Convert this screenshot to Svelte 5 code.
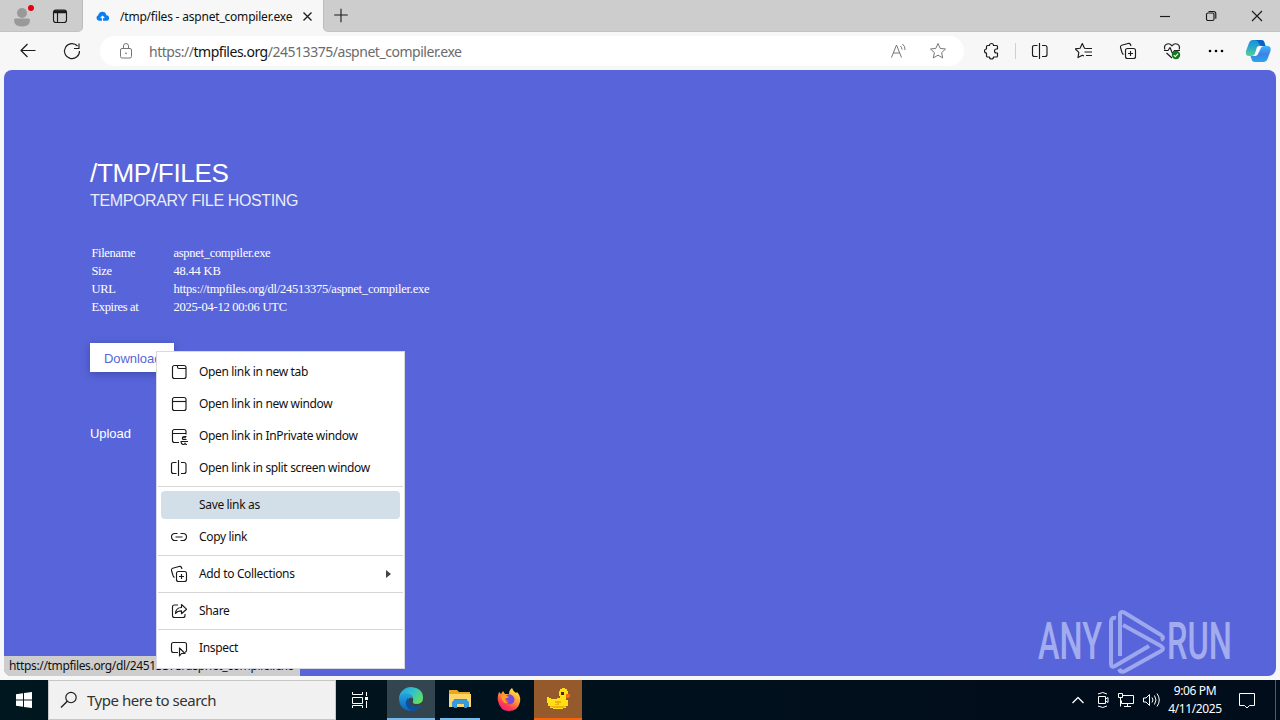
<script>
  const details = [
    ['Filename', 'aspnet_compiler.exe', -0.29],
    ['Size', '48.44 KB', -0.2],
    ['URL', 'https://tmpfiles.org/dl/24513375/aspnet_compiler.exe', -0.23],
    ['Expires at', '2025-04-12 00:06 UTC', -0.24]
  ];
  const groups = [
    [
      { icon: 'tab', label: 'Open link in new tab' },
      { icon: 'window', label: 'Open link in new window' },
      { icon: 'private', label: 'Open link in InPrivate window' },
      { icon: 'split', label: 'Open link in split screen window' }
    ],
    [
      { icon: '', label: 'Save link as', active: true },
      { icon: 'link', label: 'Copy link' }
    ],
    [{ icon: 'collections', label: 'Add to Collections', sub: true }],
    [{ icon: 'share', label: 'Share' }],
    [{ icon: 'inspect', label: 'Inspect' }]
  ];
</script>

{#snippet icon(name)}
  <svg class="ico" viewBox="0 0 18 18" width="18" height="18">
    {#if name === 'tab'}
      <rect x="2.5" y="2.5" width="13.500" height="13" rx="2" /><path d="M7.500 2.500v1.500q0 1.500 1.500 1.500h7" />
    {:else if name === 'window'}
      <rect x="2.5" y="2.5" width="13.500" height="13" rx="2" /><path d="M2.500 6.500h13.500" />
    {:else if name === 'private'}
      <path d="M9 15.500H4.500q-2 0-2-2v-9q0-2 2-2h9.500q2 0 2 2v3M2.500 6.500h13.500M16.500 9.500h-2.500q-1.500 0-1.500 1.200h3.500M12.500 10.700q-.5 1.800 1.500 1.800h2.500M10.500 14.500h7.500M11 14.500q0 3 2.500 3 1.500 0 1.500-1.500 0 1.500 2 1.500" />
    {:else if name === 'split'}
      <path d="M6.500 3.500h-3q-2 0-2 2v7q0 2 2 2h3M11 3.500h3q2 0 2 2v7q0 2-2 2h-3M8.500 1v16" />
    {:else if name === 'link'}
      <path d="M7.500 5.500H5a3.500 3.500 0 0 0 0 7h2.500M10.500 5.500H13a3.500 3.500 0 0 1 0 7h-2.500M5.500 9h7" />
    {:else if name === 'collections'}
      <rect x="6.500" y="6.500" width="10" height="10" rx="2" /><path d="M11.500 9v5M9 11.500h5M4.500 12.500Q3.500 12 3 10.500L1.500 5.500Q1 3.800 2.700 3.200L9 1.500q1.800-.4 2.500 1l.5 1.500" />
    {:else if name === 'share'}
      <path d="M8 3H4.500q-2 0-2 2v8.500q0 2 2 2H13q2 0 2-2V12M5.500 11.500Q6 5.500 11.500 5.500V2.500l5 4.700-5 4.500V8.800Q7.500 8.800 5.500 11.500Z" />
    {:else if name === 'inspect'}
      <path d="M8 13.500H3.500q-2 0-2-2v-6q0-2 2-2h11q2 0 2 2v6q0 1.500-1.500 1.800M9.500 9v8l2-2.500h3.500Z" />
    {/if}
  </svg>
{/snippet}

<div class="screen">
  <div class="tabs">
    <div class="left-tabs">
      <svg width="34" height="32" viewBox="0 0 34 32"><g fill="#999"><circle cx="22" cy="13" r="5" /><path d="M14 20q0-1.500 1.500-1.500h13q1.500 0 1.500 1.500 0 6.500-8 6.500T14 20Z" /></g><circle cx="31" cy="8" r="3" fill="#e3000f" /></svg>
      <svg class="ico panel" width="16" height="16" viewBox="0 0 16 16"><rect x="1.500" y="2" width="13" height="12.500" rx="2.500" /><path d="M2 4.500h12M2 3.200h12" stroke-width="1.700" /><path d="M5.500 5v9" /></svg>
    </div>
    <div class="tab">
      <svg width="13" height="11" viewBox="0 0 13 11"><path d="M3 9.800A2.900 2.900 0 0 1 2.200 4.300Q3 .8 6.300.8T10.500 4.200A2.800 2.800 0 0 1 10 9.800Z" fill="#0d7df5" /><path d="M6.500 10V5.500M4.700 7l1.800-1.800L8.300 7" stroke="#f7f7f7" stroke-width="1.100" fill="none" /></svg>
      <span class="title">/tmp/files - aspnet_compiler.exe</span>
      <svg class="ico close" width="11" height="11" viewBox="0 0 11 11"><path d="M1.500 1.500l8 8M9.500 1.500l-8 8" stroke-width="1.300" /></svg>
    </div>
    <svg class="ico plus" width="34" height="32" viewBox="0 0 34 32"><path d="M17.500 9v14M10.500 15.500h14" /></svg>
    <div class="controls">
      <svg class="ico" width="12" height="12" viewBox="0 0 12 12"><path d="M1 6.500h10" /></svg>
      <svg class="ico" width="12" height="12" viewBox="0 0 12 12"><rect x="1.500" y="3" width="7.500" height="7.500" rx="1.500" /><path d="M3.500 1.500h5q2.300 0 2.300 2.300v5" /></svg>
      <svg class="ico" width="12" height="12" viewBox="0 0 12 12"><path d="M1 1l10 10M11 1L1 11" /></svg>
    </div>
  </div>

  <div class="toolbar">
    <svg class="ico back" width="18" height="18" viewBox="0 0 18 18"><path d="M17.500 8.500H3M9.500 2L3 8.500 9.500 15" /></svg>
    <svg class="ico reload" width="18" height="18" viewBox="0 0 18 18"><path d="M16.500 9A7.500 7.500 0 1 1 14.500 4M16 1.500v5h-5" /></svg>
    <div class="address">
      <svg class="ico gray" width="14" height="18" viewBox="0 0 14 18"><rect x="1.500" y="6.500" width="11" height="9.500" rx="1.500" /><path d="M4.500 6.500V4a2.500 2.500 0 0 1 5 0v2.500" /><circle cx="7" cy="11.300" r=".5" /></svg>
      <span class="url">https://<b>tmpfiles.org</b>/24513375/aspnet_compiler.exe</span>
      <svg class="ico gray read" width="18" height="18" viewBox="0 0 18 18"><path d="M1.500 15.500L6.500 3l5 12.500M3.200 11h6.600M10.500 4q1.500 1.400 1.500 3.500M12.500 2q3 2.500 2.500 6" /></svg>
      <svg class="ico gray star" width="18" height="18" viewBox="0 0 18 18"><path d="M9 1.500l2.200 4.900 5.300.6-3.900 3.600 1.100 5.300L9 13.200l-4.700 2.700 1.100-5.300L1.500 7l5.300-.6Z" /></svg>
    </div>
    <div class="tools">
      <svg class="ico puzzle" width="18" height="18" viewBox="0 0 18 18"><path d="M5.500 3.500h2a2 2 0 0 1 4 0H14.500q1 0 1 1V7h-1a2 2 0 0 0 0 4h1v3q0 1-1 1h-3a2 2 0 0 1-4 0h-2q-1 0-1-1v-3a2 2 0 0 1 0-4V4.500q0-1 1-1Z" /></svg>
      <i class="divider"></i>
      {@render icon('split')}
      <svg class="ico" width="18" height="18" viewBox="0 0 18 18"><path d="M11.500 6.500l-2-.3-2.200-4.700-2.200 4.700-4.800.7 3.500 3.500-.8 5.200 4.300-2.300 1.700.8M11 6.500h6M9.500 10h7.500M11 13.500h6" /></svg>
      {@render icon('collections')}
      <svg class="ico" width="18" height="18" viewBox="0 0 18 18"><path d="M2 7.500C0 3 5.500-.5 9 3.800 12.500-.5 18 3 16 7.500M1 8.500h4l2-3 2.500 6 2-3h5.500M3.500 11L9 16" /><circle cx="13" cy="13" r="4.200" fill="#15761c" stroke="none" /><path d="M10.800 13.200l1.500 1.400 2.800-3" stroke="#fff" /></svg>
      <svg width="18" height="18" viewBox="0 0 18 18"><circle cx="3" cy="9" r="1.300" /><circle cx="9" cy="9" r="1.300" /><circle cx="15" cy="9" r="1.300" /></svg>
    </div>
    <svg class="copilot" width="26" height="26" viewBox="0 0 26 26">
      <defs>
        <linearGradient id="ca" x1="0" y1="0" x2="0" y2="1"><stop offset="0" stop-color="#1793d6" /><stop offset=".45" stop-color="#2aa6cf" /><stop offset="1" stop-color="#55d58b" /></linearGradient>
        <linearGradient id="cb" x1="0" y1="0" x2="0" y2="1"><stop offset="0" stop-color="#35b9fa" /><stop offset=".5" stop-color="#4280e8" /><stop offset="1" stop-color="#1faae8" /></linearGradient>
      </defs>
      <path d="M8 2h8q3 0 3.500 3l1 3h-5q-2 0-3 3l-2 4q-1 3-4 3H4q-4 0-3-5L4 5q1-3 4-3Z" fill="url(#ca)" />
      <path d="M9 2h7q3 0 3.500 3l1 3h-4q-2-1-3-3-1-3-4.500-3Z" fill="#0b61c5" />
      <path d="M18 24h-8q-3 0-3.500-3l-1-3h5q2 0 3-3l2-4q1-3 4-3h3q4 0 3 5l-3 8q-1 3-4.500 3Z" fill="url(#cb)" />
      <path d="M12 9q1-1 3-1h2q-2 1-3 4l-1.500 4q-1 2-3.500 2h-1q2-1 2.500-4Z" fill="#fff" />
    </svg>
  </div>

  <main>
    <h1>/TMP/FILES</h1>
    <h2>TEMPORARY FILE HOSTING</h2>
    <dl>
      {#each details as [key, value, gap]}
        <dt>{key}</dt><dd style="letter-spacing: {gap}px">{value}</dd>
      {/each}
    </dl>
    <a class="download" href="#download">Download</a>
    <a class="upload" href="#upload">Upload</a>
    <svg class="mark" width="236" height="70" viewBox="0 0 236 70">
      <g fill="#b9c0f5" fill-opacity=".78" font-family="Roboto" font-size="51" font-weight="500">
        <text x="6" y="54" textLength="64" lengthAdjust="spacingAndGlyphs">ANY</text>
        <text x="135" y="54" textLength="65" lengthAdjust="spacingAndGlyphs">RUN</text>
      </g>
      <g fill="none" stroke="#b9c0f5" stroke-opacity=".72" stroke-width="4" stroke-linejoin="round">
        <path d="M84 13q-5-1-5 4v42q0 4 4 2l34-20" />
        <path d="M88 51V10q0-5 5-2l36 22q4 3 0 5" />
        <path d="M91 20l38 21q4 3 0 5L93 66q-4 2-6-2" />
      </g>
    </svg>
  </main>

  <div class="taskbar">
    <div class="start"><svg width="16" height="16" viewBox="0 0 16 16"><path d="M0 2.200L7 1.200V7.500H0ZM8 1L16 0V7.500H8ZM0 8.500H7V14.800L0 13.800ZM8 8.500H16V16L8 15Z" fill="#fff" /></svg></div>
    <div class="search">
      <svg class="ico" width="18" height="18" viewBox="0 0 18 18"><circle cx="11" cy="6.500" r="5.200" /><path d="M7.300 10.200L1 16.500" stroke-width="1.300" /></svg>
      <span>Type here to search</span>
    </div>
    <div class="app view"><svg class="ico white" width="18" height="18" viewBox="0 0 18 18"><path d="M1.500 1v2.500h10V1M1.500 6.500h10v6h-10ZM1.500 17v-2.500h10V17M15.500 1v4M15.500 10v7" /><path d="M14 6h3v3h-3Z" fill="#fff" stroke="none" /></svg></div>
    <div class="app edge">
      <svg width="26" height="26" viewBox="0 0 26 26">
        <defs>
          <linearGradient id="ea" x1="0" y1="0" x2="1" y2=".6"><stop offset="0" stop-color="#239bdf" /><stop offset=".5" stop-color="#30bfd0" /><stop offset="1" stop-color="#60dc64" /></linearGradient>
          <linearGradient id="eb" x1="0" y1="0" x2="0" y2="1"><stop offset="0" stop-color="#24a6df" /><stop offset="1" stop-color="#0b64bb" /></linearGradient>
        </defs>
        <path d="M1 12C2 5 7 1 13 1q12 1 12 11 0 6-7 6-4 0-3-3 1-2-1-4Q9 6 1 12Z" fill="url(#ea)" />
        <path d="M1 12q2-5 8-5 6 1 6 5-5-1-5 3 1 6 8 6 3 0 5-1-4 5-10 5Q1 24 1 12Z" fill="url(#eb)" />
        <path d="M10 12q-4 4-1 9 2 3 6 4 5-1 8-5-3 1-6 1-7-1-7-9Z" fill="#0e4f9c" />
      </svg>
    </div>
    <div class="app folder">
      <svg width="24" height="22" viewBox="0 0 24 22"><path d="M1 2h8l2 2h11v15H1Z" fill="#e9a722" /><path d="M1 6h22v13H1Z" fill="#fcd667" /><path d="M6 11h13v9h-3v-4H9v4H6Z" fill="#2b91d7" /><path d="M4 19v-5l2-2h13l2 2v5h-4v-3H8v3Z" fill="#3a9bdc" /></svg>
    </div>
    <div class="app fox">
      <svg width="26" height="26" viewBox="0 0 26 26">
        <defs><linearGradient id="fx" x1=".8" y1="0" x2=".2" y2="1"><stop offset="0" stop-color="#fff04b" /><stop offset=".45" stop-color="#ff9334" /><stop offset=".75" stop-color="#ff3951" /><stop offset="1" stop-color="#e52091" /></linearGradient></defs>
        <path d="M3 5l2 2 2-3 2 3h4q0-4 3-6 1 3 4 5l1-1q4 4 3 10-2 9-11 9T2 14q-1-4 1-9Z" fill="url(#fx)" />
        <path d="M8 10l3-2q3-2 6 1 3 4 0 7-4 3-8-1l4-1q-4-1-5-4Z" fill="#754bdc" /><path d="M5 9q3-2 6 0l2 1-4 2q0 3 4 4-6 2-8-7Z" fill="#ff9e29" />
      </svg>
    </div>
    <div class="app duck">
      <svg width="26" height="24" viewBox="0 0 26 24"><path d="M15 2h2V1h3v1h2v2h1v7h-2v2h2v6h-2v2h-3v1H8v-1H5v-2H3v-3H2v-6h2v1h2v1h6v-1h3v-2h-1V4h1Z" fill="#ffdf16" /><path d="M10 14h6v2h-2v2h-4v-1h2v-1h-2ZM5 19h16v1h-2v1H8v-1H5Z" fill="#efb10c" /><path d="M21 7h4v3h-1v1h-3Z" fill="#f36818" /><path d="M16 5h3v3h-3Z" fill="#402c09" /></svg>
    </div>
    <div class="tray">
      <svg class="ico white" width="14" height="14" viewBox="0 0 14 14"><path d="M1.500 10L7 4.500l5.500 5.500" stroke-width="1.300" /></svg>
      <svg class="ico white" width="14" height="18" viewBox="0 0 14 18"><path d="M2.500 5.500h7v7h-7ZM9.500 8l2.500-1.500v5L9.500 10M2 3q5-3 9 0M2 15q5 3 9 0" /></svg>
      <svg class="ico white" width="18" height="18" viewBox="0 0 18 18"><path d="M5.500 4.500h11v8h-12v-3M7 15.500h7M10.500 12.500v3M1.500 2.500h4v4h-4ZM3.500 6.500v9" /></svg>
      <svg class="ico white" width="18" height="18" viewBox="0 0 18 18"><path d="M1.500 7h2.500l3.500-3.500v11L4 11H1.500ZM10 6.500q2 2.500 0 5M12.500 4.500q3 4.500 0 9M15 2.500q4.500 6.500 0 13" /></svg>
      <div class="clock"><span>9:06 PM</span><span>4/11/2025</span></div>
      <svg class="ico white note" width="18" height="18" viewBox="0 0 18 18"><path d="M1.500 2.500h15v12h-5L9 17l-2.500-2.500h-5Z" /></svg>
      <i></i>
    </div>
  </div>

  <div class="status">https://tmpfiles.org/dl/24513375/aspnet_compiler.exe</div>
  <div class="menu">
    {#each groups as group, n}
      {#if n > 0}<hr />{/if}
      {#each group as item}
        <div class="item" class:active={item.active}>
          {@render icon(item.icon)}
          <span>{item.label}</span>
          {#if item.sub}<b class="arrow"></b>{/if}
        </div>
      {/each}
    {/each}
  </div>
</div>

<style>
  :global(body) { overflow: hidden; }
  * { box-sizing: border-box; }
  .screen { position: relative; display: flex; flex-direction: column; width: 1280px; height: 720px; overflow: hidden; background: #f7f7f7; font: 12px "Noto Sans", sans-serif; color: #111; }
  svg { display: block; flex: none; }
  .ico { fill: none; stroke: #1b1b1b; stroke-width: 1.15; stroke-linejoin: round; }
  .gray { stroke: #777; stroke-width: 1; }
  .white { stroke: #fff; stroke-width: 1; }
  .tabs { display: flex; flex: none; height: 32px; background: #f7f7f7; }
  .left-tabs { display: flex; align-items: center; width: 83px; background: #cdcdcd; border-radius: 0 0 5px 0; border-right: 1px solid #bcbcbc; border-bottom: 1px solid #c3c3c3; }
  .panel { margin-left: 18px; }
  .tab { display: flex; align-items: center; width: 240px; padding-left: 13px; }
  .title { width: 174px; margin-left: 11px; white-space: nowrap; letter-spacing: -.2px; }
  .close { margin-left: 8px; }
  .plus { background: #cdcdcd; border-radius: 0 0 0 5px; border-bottom: 1px solid #c3c3c3; border-left: 1px solid #bcbcbc; }
  .controls { display: flex; flex: 1; justify-content: flex-end; gap: 34px; align-items: center; padding-right: 17px; background: #cdcdcd; border-bottom: 1px solid #c3c3c3; }
  .toolbar { display: flex; flex: none; align-items: center; height: 38px; }
  .back { margin-left: 18px; }
  .reload { margin-left: 27px; }
  .address { display: flex; align-items: center; width: 864px; height: 30px; margin-left: 19px; padding: 0 17px 0 19px; border-radius: 15px; background: #fff; }
  .url { margin-left: 16px; font-size: 14px; color: #6b6b6b; white-space: nowrap; letter-spacing: -.47px; }
  .url b { font-weight: 400; color: #111; }
  .read { margin-left: auto; }
  .star { margin-left: 21px; }
  .tools { display: flex; align-items: center; gap: 26px; margin-left: 18px; }
  .divider { width: 1px; height: 16px; margin: 0 -11px; background: #d0d0d0; }
  .copilot { margin-left: 20px; }
  main { display: flex; flex-direction: column; align-items: flex-start; flex: none; position: relative; height: 606px; margin: 0 4px; padding: 88px 0 0 86px; border-radius: 8px; background: #5865da; color: #fff; font-family: "Liberation Sans", sans-serif; }
  h1 { margin: 0; font-size: 26px; line-height: 30px; font-weight: 400; letter-spacing: -.3px; }
  h2 { margin: 4px 0 0; font-size: 16px; line-height: 18px; font-weight: 400; opacity: .88; white-space: nowrap; letter-spacing: -.38px; }
  dl { display: grid; grid-template-columns: 82px auto; grid-auto-rows: 18px; margin: 34px 0 0 1.5px; font: 12.5px/18px "Liberation Serif", serif; }
  dt { letter-spacing: -.35px; }
  dd { margin: 0; white-space: nowrap; }
  a { color: inherit; text-decoration: none; font-size: 13px; letter-spacing: -.05px; }
  .download { width: 84px; height: 29px; margin-top: 27px; padding-left: 14px; background: #fff; color: #5865da; line-height: 31px; box-shadow: 0 2px 8px rgba(20, 25, 80, .35); }
  .upload { margin-top: 54px; line-height: 16px; }
  .mark { position: absolute; left: 1028px; top: 535px; }
  .status { position: absolute; left: 4px; top: 656px; width: 296px; height: 20px; padding-left: 5px; background: #cdcdcd; border-radius: 0 0 0 7px; line-height: 20px; white-space: nowrap; letter-spacing: -.35px; }
  .menu { position: absolute; display: flex; flex-direction: column; left: 156px; top: 351px; width: 249px; height: 318px; padding: 4px 0; border: 1px solid #d9d9df; background: #fff; }
  .item { display: flex; align-items: center; height: 32px; padding: 0 9px; margin: 0 4px; }
  .item span { margin-left: 11px; padding-bottom: 1px; white-space: nowrap; letter-spacing: -.34px; }
  .active { height: 28px; margin-top: 2px; margin-bottom: 2px; border-radius: 4px; background: #d3dfe8; }
  .arrow { margin-left: auto; border: 4px solid transparent; border-left: 5px solid #444; border-right: 0; }
  hr { flex: none; height: 1px; width: 245px; margin: 2px 1px; border: 0; background: #d6d6d6; }
  .taskbar { display: flex; height: 40px; margin-top: 4px; background: linear-gradient(90deg, #00171f, #010d1b 80%); }
  .start { display: grid; place-items: center; width: 48px; }
  .search { display: flex; align-items: center; width: 288px; padding-left: 11px; background: #f1f1f1; border: 1px solid #c7c7c7; font-size: 15px; color: #333; }
  .search span { margin-left: 9px; white-space: nowrap; letter-spacing: -.47px; }
  .app { display: grid; place-items: center; width: 49px; height: 40px; }
  .view { width: 51px; padding-right: 3px; }
  .edge { width: 48px; background: #33464f; border-bottom: 2px solid #76b9ed; }
  .folder { width: 40px; margin: 0 5px; border-bottom: 2px solid #76b9ed; }
  .fox { padding-right: 2px; }
  .duck { width: 48px; background: #955a2b; border-bottom: 2px solid #f7630c; }
  .tray { display: flex; align-items: center; margin-left: auto; gap: 7px; color: #fff; }
  .tray svg:first-child { margin-right: 4px; }
  .clock { display: flex; flex-direction: column; align-items: center; width: 58px; padding-right: 2px; line-height: 18px; letter-spacing: -.38px; white-space: nowrap; }
  .note { margin-left: 6px; }
  .tray i { width: 1px; height: 40px; margin-left: 12px; margin-right: 4px; background: #535b64; }
</style>
